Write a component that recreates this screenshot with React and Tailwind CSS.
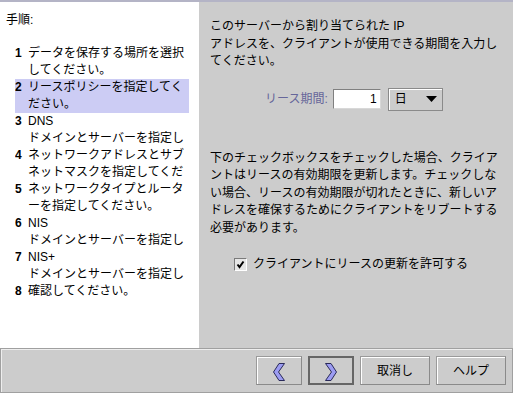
import React from "react";

const font = { fontFamily: '"Liberation Sans", "Noto Sans CJK JP", sans-serif' };

const steps = [
  { n: "1", lines: ["データを保存する場所を選択", "してください。"] },
  { n: "2", lines: ["リースポリシーを指定してく", "ださい。"], active: true },
  { n: "3", lines: ["DNS", "ドメインとサーバーを指定し"] },
  { n: "4", lines: ["ネットワークアドレスとサブ", "ネットマスクを指定してくだ"] },
  { n: "5", lines: ["ネットワークタイプとルータ", "ーを指定してください。"] },
  { n: "6", lines: ["NIS", "ドメインとサーバーを指定し"] },
  { n: "7", lines: ["NIS+", "ドメインとサーバーを指定し"] },
  { n: "8", lines: ["確認してください。"] },
];

function Chevron({ dir }) {
  const pts =
    dir === "left"
      ? "11.5,0.5 5.5,9 11.5,17.5 6,17.5 0.5,9 6,0.5"
      : "0.5,0.5 6.5,9 0.5,17.5 6,17.5 11.5,9 6,0.5";
  return (
    <svg width="12" height="18" viewBox="0 0 12 18" className="mt-[2px]">
      <polygon points={pts} fill="#9c9cf2" stroke="#2a2a5a" strokeWidth="1" strokeLinejoin="miter" />
    </svg>
  );
}

function Btn({ children, w, focus }) {
  return (
    <div
      className={
        "flex items-center justify-center h-[29px] bg-[#cccccc] text-[12px] text-black " +
        (focus
          ? "border-2 border-[#666666]"
          : "border border-t-[#9a9a9a] border-l-[#9a9a9a] border-b-[#8a8a8a] border-r-[#8a8a8a] shadow-[inset_1px_1px_0_#ffffff]")
      }
      style={{ width: w }}
    >
      {children}
    </div>
  );
}

export default function App() {
  return (
    <div className="w-[513px] h-[393px] bg-[#cccccc] flex flex-col overflow-hidden text-black" style={font}>
      <div className="h-[2px] bg-[#b4b4c6] shrink-0" />
      <div className="flex flex-1 min-h-0">
        <div className="w-[199px] bg-white shrink-0 pt-[10px]">
          <div className="pl-[6px] text-[12px] leading-[17px]">手順:</div>
          <div className="mt-[16px] flex flex-col">
            {steps.map((s) => (
              <div
                key={s.n}
                className={"ml-[15px] w-[174px] flex text-[12px] leading-[17px] whitespace-nowrap overflow-hidden " + (s.active ? "bg-[#ccccf4]" : "")}
              >
                <div className="w-[13px] shrink-0 font-bold">{s.n}</div>
                <div className="flex flex-col">
                  {s.lines.map((l, i) => (
                    <div key={i} className="h-[17px]">{l}</div>
                  ))}
                </div>
              </div>
            ))}
          </div>
        </div>
        <div className="flex-1 pl-[11px] pt-[16px] flex flex-col whitespace-nowrap">
          <div className="text-[12px] leading-[17.5px]">
            <div>このサーバーから割り当てられた IP</div>
            <div>アドレスを、クライアントが使用できる期間を入力し</div>
            <div>てください。</div>
          </div>
          <div className="flex items-center mt-[17px] pl-[55px] h-[23px]">
            <div className="text-[12px] text-[#66669a]">リース期間:</div>
            <div className="ml-[5px] w-[48px] h-[20px] bg-white border border-t-[#808080] border-l-[#808080] border-b-[#d8d8d8] border-r-[#d8d8d8] flex items-center justify-end pr-[3px] text-[12px]">
              1
            </div>
            <div className="ml-[7px] w-[55px] h-[23px] border border-[#8a8a8a] shadow-[inset_1px_1px_0_#ffffff] flex items-center pl-[6px] text-[12px]">
              <span>日</span>
              <svg className="ml-[19px]" width="11" height="6" viewBox="0 0 11 6">
                <polygon points="0,0 11,0 5.5,6" fill="#000" />
              </svg>
            </div>
          </div>
          <div className="mt-[39px] text-[12px] leading-[17.5px]">
            <div>下のチェックボックスをチェックした場合、クライア</div>
            <div>ントはリースの有効期限を更新します。チェックしな</div>
            <div>い場合、リースの有効期限が切れたときに、新しいア</div>
            <div>ドレスを確保するためにクライアントをリブートする</div>
            <div>必要があります。</div>
          </div>
          <div className="flex items-center mt-[18px] pl-[24px]">
            <div className="w-[13px] h-[13px] bg-[#e6e6e6] border border-t-[#7a7a7a] border-l-[#7a7a7a] border-b-[#ffffff] border-r-[#ffffff] flex items-center justify-center">
              <svg width="9" height="9" viewBox="0 0 9 9">
                <path d="M1.5 4.5 L3.5 7 L7.5 1.5" fill="none" stroke="#000" strokeWidth="2" />
              </svg>
            </div>
            <div className="ml-[6px] text-[12px]">クライアントにリースの更新を許可する</div>
          </div>
        </div>
      </div>
      <div className="h-[45px] shrink-0 border border-[#a0a0a0] shadow-[inset_1px_1px_0_#eeeeee] flex items-center justify-end pr-[6px] gap-[6px]">
        <Btn w={46}>
          <Chevron dir="left" />
        </Btn>
        <Btn w={46} focus>
          <Chevron dir="right" />
        </Btn>
        <Btn w={70}>取消し</Btn>
        <Btn w={70}>ヘルプ</Btn>
      </div>
    </div>
  );
}
